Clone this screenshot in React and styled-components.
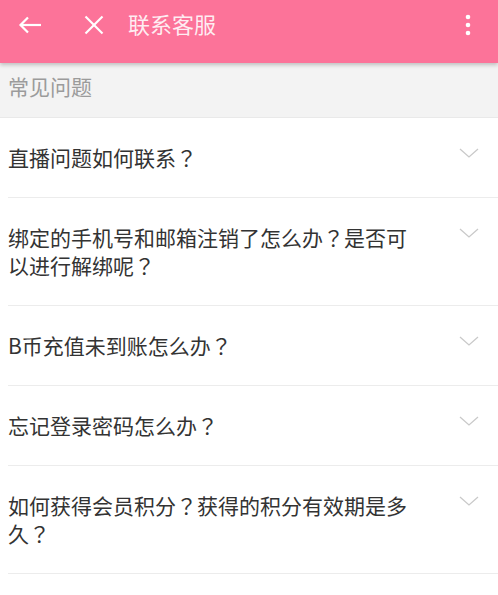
import styled, { createGlobalStyle } from "styled-components";

const GlobalStyle = createGlobalStyle`
    body {
        margin: 0;
        background: #fff;
        font-family: "Noto Sans CJK SC", "Noto Sans", sans-serif;
    }
`

const Page = styled.div`
    width: 100%;
    min-height: 100vh;
    background: #fff;
`

const TopBar = styled.header`
    position: relative;
    z-index: 1;
    height: 63px;
    padding-bottom: 13px;
    box-sizing: border-box;
    display: flex;
    align-items: center;
    background: #fc7399;
    box-shadow: 0 2px 4px rgba(0, 0, 0, 0.22);
`

const IconButton = styled.button`
    width: ${(p) => p.$width}px;
    height: 50px;
    padding: 0;
    border: none;
    background: none;
    display: flex;
    align-items: center;
    justify-content: center;
    flex-shrink: 0;
`

const Title = styled.h1`
    flex: 1;
    margin: 0 0 4px;
    font-size: 22px;
    font-weight: 400;
    line-height: 46px;
    color: rgba(255, 255, 255, 0.88);
`

const SectionHead = styled.div`
    height: 46px;
    padding: 0 0 8px 8px;
    display: flex;
    align-items: center;
    background: #f3f3f3;
    border-bottom: 1px solid #e9e9e9;
    font-size: 21px;
    color: #9b9b9b;
`

const List = styled.ul`
    margin: 0;
    padding: 0;
    list-style: none;
`

const Item = styled.li`
    display: flex;
    justify-content: space-between;
    align-items: flex-start;
    margin-left: 8px;
    padding: 25px 19px 26px 0;
    border-bottom: 1px solid #ececec;
`

const Question = styled.span`
    flex: 0 1 410px;
    font-size: 21px;
    line-height: 28px;
    color: #333;
`

// centred full-width question mark, as in the screenshot
const Punct = styled.span`
    font-family: "Noto Sans CJK JP", "Noto Sans CJK SC", sans-serif;
`

const Chevron = styled.svg`
    margin-top: 5px;
    flex-shrink: 0;
`

const questions = [
    "直播问题如何联系？",
    "绑定的手机号和邮箱注销了怎么办？是否可以进行解绑呢？",
    "B币充值未到账怎么办？",
    "忘记登录密码怎么办？",
    "如何获得会员积分？获得的积分有效期是多久？",
];

function renderText(q) {
    return q.split(/(？)/).map((part, i) =>
        part === "？" ? <Punct key={i}>？</Punct> : part
    );
}

const App = () => {
    return (
        <Page>
            <GlobalStyle />
            <TopBar>
                <IconButton $width={60}>
                    <svg width="24" height="18" viewBox="0 0 24 18" fill="none" stroke="#fff" strokeWidth="2.2">
                        <line x1="2.5" y1="9" x2="23" y2="9" />
                        <polyline points="10,1.5 2.5,9 10,16.5" />
                    </svg>
                </IconButton>
                <IconButton $width={68}>
                    <svg width="20" height="20" viewBox="0 0 20 20" fill="none" stroke="#fff" strokeWidth="2.1">
                        <line x1="1.5" y1="1.5" x2="18.5" y2="18.5" />
                        <line x1="18.5" y1="1.5" x2="1.5" y2="18.5" />
                    </svg>
                </IconButton>
                <Title>联系客服</Title>
                <IconButton $width={60}>
                    <svg width="6" height="22" viewBox="0 0 6 22" fill="#fff">
                        <circle cx="3" cy="3" r="2.3" />
                        <circle cx="3" cy="11" r="2.3" />
                        <circle cx="3" cy="19" r="2.3" />
                    </svg>
                </IconButton>
            </TopBar>
            <SectionHead>常见问题</SectionHead>
            <List>
                {questions.map((q) => (
                    <Item key={q}>
                        <Question>{renderText(q)}</Question>
                        <Chevron width="20" height="10" viewBox="0 0 20 10" fill="none" stroke="#c9c9c9" strokeWidth="1.3">
                            <polyline points="1,1 10,9 19,1" />
                        </Chevron>
                    </Item>
                ))}
            </List>
        </Page>
    );
}

export default App;
